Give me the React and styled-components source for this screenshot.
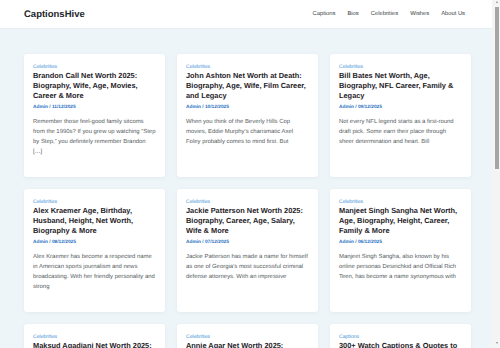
import React from 'react';
import styled, { createGlobalStyle } from 'styled-components';

const COLORS = {
  pageBg: '#eef5f9',
  headerBg: '#ffffff',
  border: '#e3edf3',
  card: '#ffffff',
  title: '#1f2328',
  text: '#555b61',
  nav: '#3a3f44',
  category: '#3d8fd6',
  meta: '#1f6fbf',
  track: '#f4f4f4',
  thumb: '#a6a6a6',
};

const GlobalStyle = createGlobalStyle`
  html, body {
    margin: 0;
    padding: 0;
    height: 100%;
    overflow: hidden;
    background: ${COLORS.pageBg};
    font-family: 'Liberation Sans', Arial, sans-serif;
    text-rendering: geometricPrecision;
  }
`;

const Shell = styled.div`
  display: flex;
  height: 100vh;
`;

const Page = styled.div`
  flex: 1;
  min-width: 0;
  overflow: hidden;
  background: ${COLORS.pageBg};
`;

// browser scrollbar as seen in the screenshot
const ScrollBar = styled.div`
  flex: 0 0 8px;
  background: ${COLORS.track};
  display: flex;
  flex-direction: column;
  align-items: flex-end;
  padding: 1px 1px 0 0;
  box-sizing: border-box;
`;

const Arrow = styled.div`
  width: 0;
  height: 0;
  margin-right: 1px;
  border-left: 1.5px solid transparent;
  border-right: 1.5px solid transparent;
  ${(p) => (p.down
    ? `border-top: 2px solid #8a8a8a; margin-top: auto; margin-bottom: 4px;`
    : `border-bottom: 2px solid #8a8a8a;`)}
`;

const Thumb = styled.div`
  width: 4px;
  height: 162px;
  margin-top: 4px;
  background: ${COLORS.thumb};
`;

const Header = styled.header`
  height: 29px;
  box-sizing: border-box;
  background: ${COLORS.headerBg};
  border-bottom: 1px solid ${COLORS.border};
  display: flex;
  align-items: center;
  justify-content: space-between;
  padding: 0 27px 0 24px;
`;

const Logo = styled.div`
  font-size: 9.5px;
  font-weight: 700;
  color: #24282c;
`;

const Nav = styled.nav`
  display: flex;
  gap: 12px;
`;

const NavLink = styled.a`
  font-size: 5.8px;
  color: ${COLORS.nav};
  text-decoration: none;
`;

const Main = styled.main`
  padding: 25px 21px 24px 24px;
`;

const Grid = styled.div`
  display: grid;
  grid-template-columns: repeat(3, 1fr);
  gap: 12px;
`;

const Card = styled.article`
  background: ${COLORS.card};
  border-radius: 3px;
  box-shadow: 0 1px 4px rgba(40, 70, 100, 0.06);
  padding: 9px 9px 20px 9px;
  display: flex;
  flex-direction: column;
`;

const Category = styled.div`
  font-size: 5.1px;
  line-height: 8px;
  color: ${COLORS.category};
`;

const Title = styled.h2`
  margin: 0;
  font-size: 7.4px;
  line-height: 10px;
  font-weight: 700;
  color: ${COLORS.title};
`;

const Meta = styled.div`
  margin-top: 3px;
  font-size: 4.8px;
  line-height: 8px;
  font-weight: 700;
  color: ${COLORS.meta};
`;

const Excerpt = styled.p`
  margin: 5px 0 0;
  font-size: 5.93px;
  line-height: 10px;
  color: ${COLORS.text};
`;

const POSTS = [
  {
    cat: 'Celebrities',
    title: 'Brandon Call Net Worth 2025: Biography, Wife, Age, Movies, Career & More',
    date: '11/12/2025',
    text: 'Remember those feel-good family sitcoms from the 1990s? If you grew up watching \u201cStep by Step,\u201d you definitely remember Brandon [\u2026]',
  },
  {
    cat: 'Celebrities',
    title: 'John Ashton Net Worth at Death: Biography, Age, Wife, Film Career, and Legacy',
    date: '10/12/2025',
    text: "When you think of the Beverly Hills Cop movies, Eddie Murphy's charismatic Axel Foley probably comes to mind first. But",
  },
  {
    cat: 'Celebrities',
    title: 'Bill Bates Net Worth, Age, Biography, NFL Career, Family & Legacy',
    date: '09/12/2025',
    text: 'Not every NFL legend starts as a first-round draft pick. Some earn their place through sheer determination and heart. Bill',
  },
  {
    cat: 'Celebrities',
    title: 'Alex Kraemer Age, Birthday, Husband, Height, Net Worth, Biography & More',
    date: '08/12/2025',
    text: 'Alex Kraemer has become a respected name in American sports journalism and news broadcasting. With her friendly personality and strong',
  },
  {
    cat: 'Celebrities',
    title: 'Jackie Patterson Net Worth 2025: Biography, Career, Age, Salary, Wife & More',
    date: '07/12/2025',
    text: 'Jackie Patterson has made a name for himself as one of Georgia\u2019s most successful criminal defense attorneys. With an impressive',
  },
  {
    cat: 'Celebrities',
    title: 'Manjeet Singh Sangha Net Worth, Age, Biography, Height, Career, Family & More',
    date: '06/12/2025',
    text: 'Manjeet Singh Sangha, also known by his online personas Desirichkid and Official Rich Teen, has become a name synonymous with',
  },
  {
    cat: 'Celebrities',
    title: 'Maksud Agadjani Net Worth 2025: Biography, Age, Wife, Career & More',
    date: '05/12/2025',
    text: 'Maksud Agadjani has built a loyal following online with his bold personality and lifestyle content. From humble',
  },
  {
    cat: 'Celebrities',
    title: 'Annie Agar Net Worth 2025: Biography, Age, Boyfriend, Career & More',
    date: '04/12/2025',
    text: 'Annie Agar has become one of the most recognizable voices in sports media, blending humor with genuine',
  },
  {
    cat: 'Captions',
    title: '300+ Watch Captions & Quotes to Show Off Your Style on Instagram',
    date: '03/12/2025',
    text: 'A great watch says a lot about the person wearing it. Whether you love classic timepieces or modern smartwatches',
  },
];

const NAV = ['Captions', 'Bios', 'Celebrities', 'Wishes', 'About Us'];

export default function App() {
  return (
    <>
      <GlobalStyle />
      <Shell>
        <Page>
          <Header>
            <Logo>CaptionsHive</Logo>
            <Nav>
              {NAV.map((n) => (
                <NavLink key={n} href="#">{n}</NavLink>
              ))}
            </Nav>
          </Header>
          <Main>
            <Grid>
              {POSTS.map((p) => (
                <Card key={p.title}>
                  <Category>{p.cat}</Category>
                  <Title>{p.title}</Title>
                  <Meta>Admin / {p.date}</Meta>
                  <Excerpt>{p.text}</Excerpt>
                </Card>
              ))}
            </Grid>
          </Main>
        </Page>
        <ScrollBar>
          <Arrow />
          <Thumb />
          <Arrow down />
        </ScrollBar>
      </Shell>
    </>
  );
}
